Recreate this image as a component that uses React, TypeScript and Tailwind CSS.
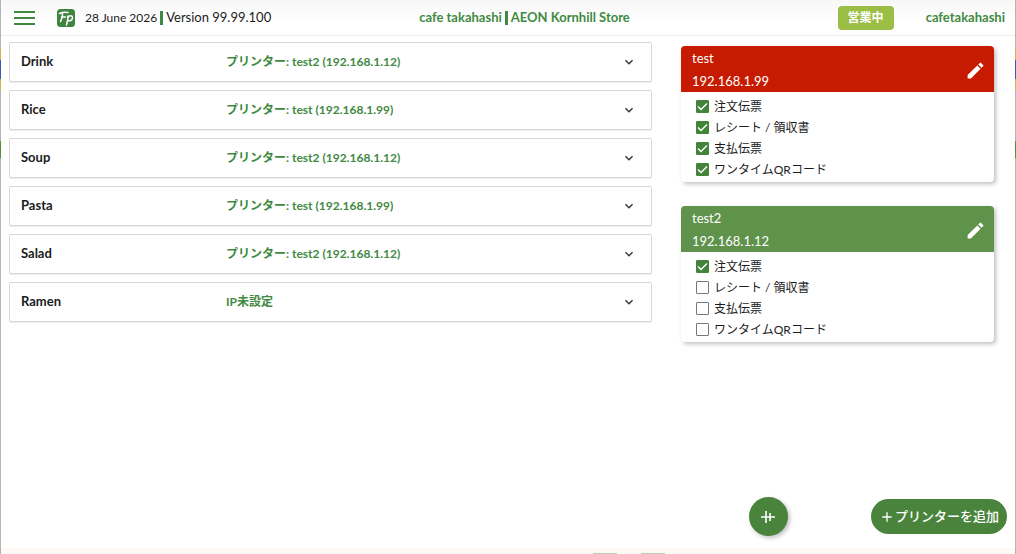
/**
 * Printer settings screen
 * Lists menu categories with their assigned printer and the registered printers
 */
import { useState } from "react";
import { MdAdd, MdEdit, MdExpandMore } from "react-icons/md";

interface Category {
  name: string;
  printer: string;
}

interface Printer {
  name: string;
  ip: string;
  online: boolean;
  jobs: string[];
}

const CATEGORIES: Category[] = [
  { name: "Drink", printer: "プリンター: test2 (192.168.1.12)" },
  { name: "Rice", printer: "プリンター: test (192.168.1.99)" },
  { name: "Soup", printer: "プリンター: test2 (192.168.1.12)" },
  { name: "Pasta", printer: "プリンター: test (192.168.1.99)" },
  { name: "Salad", printer: "プリンター: test2 (192.168.1.12)" },
  { name: "Ramen", printer: "IP未設定" },
];

const JOBS = ["注文伝票", "レシート / 領収書", "支払伝票", "ワンタイムQRコード"];

const PRINTERS: Printer[] = [
  { name: "test", ip: "192.168.1.99", online: false, jobs: JOBS },
  { name: "test2", ip: "192.168.1.12", online: true, jobs: ["注文伝票"] },
];

function Logo() {
  return (
    <svg className="size-[18px]" viewBox="0 0 36 36" fill="none">
      <rect width="36" height="36" rx="7" fill="#3f8540" />
      <g stroke="#fff" strokeWidth="3" strokeLinecap="round">
        <path d="M5 9C10 6 16 6 22 7M11 8C12 14 10 20 7 25M9 16h8" />
        <path d="M22 14c0 6-1 12-3 18M22 17c3-5 9-4 9 0 0 5-5 8-10 6" />
      </g>
    </svg>
  );
}

function Divider() {
  return <span className="h-[14px] w-[3px] bg-[#3f8a42]" />;
}

function Header() {
  return (
    <header className="flex h-9 items-center border-b border-[#ececec] bg-linear-to-b from-[#f7f7f7] to-white to-60% pr-[10px] pl-[13px] text-[13px]">
      <div className="flex w-[290px] shrink-0 items-center">
        <button aria-label="メニュー" className="flex w-[21px] flex-col gap-1">
          <span className="h-[2px] w-full bg-[#3f8a42]" />
          <span className="h-[2px] w-full bg-[#3f8a42]" />
          <span className="h-[2px] w-full bg-[#3f8a42]" />
        </button>
        <div className="ml-[22px]">
          <Logo />
        </div>
        <div className="ml-[10px] flex items-center gap-[3px]">
          <span className="text-[12px]">28 June 2026</span>
          <Divider />
          <span>Version 99.99.100</span>
        </div>
      </div>

      <div className="flex flex-1 items-center justify-center gap-[3px] font-bold text-[#3f8a42]">
        <span>cafe takahashi</span>
        <Divider />
        <span>AEON Kornhill Store</span>
      </div>

      <div className="flex w-[260px] shrink-0 items-center justify-end gap-8">
        <button className="h-6 w-14 rounded bg-[#9bbf45] text-[12px] font-bold text-white">
          営業中
        </button>
        <a href="#account" className="font-bold text-[#3f8a42]">
          cafetakahashi
        </a>
      </div>
    </header>
  );
}

function CategoryRow({ name, printer }: Category) {
  return (
    <button className="flex h-10 items-center rounded-xs border border-[#d8d8d8] pr-[14px] pl-[11px] text-left shadow-[0_1px_0_#ededed]">
      <span className="w-[205px] text-[13px] font-bold text-[#1c1c1c]">
        {name}
      </span>
      <span className="flex-1 text-[12px] font-bold text-[#3f8a42]">
        {printer}
      </span>
      <MdExpandMore className="size-4 text-[#333]" />
    </button>
  );
}

function PrinterCard({ name, ip, online, jobs }: Printer) {
  const [enabled, setEnabled] = useState(jobs);

  const toggle = (job: string) => {
    setEnabled(
      enabled.includes(job)
        ? enabled.filter((item) => item !== job)
        : [...enabled, job],
    );
  };

  return (
    <section className="overflow-hidden rounded bg-white shadow-[2px_2px_4px_rgba(0,0,0,0.25)]">
      <div
        className={`flex h-[46px] items-center justify-between pt-[2px] pr-2 pl-[11px] text-[13px] leading-[23px] text-white ${
          online ? "bg-[#5f924a]" : "bg-[#c61b00]"
        }`}
      >
        <div>
          <h2>{name}</h2>
          <p>{ip}</p>
        </div>
        <button aria-label="編集">
          <MdEdit className="size-[21px]" />
        </button>
      </div>

      <div className="flex flex-col px-[14px] pt-1 pb-[2px]">
        {JOBS.map((job) => (
          <label
            key={job}
            className="flex h-[21px] items-center gap-[5px] text-[12px]"
          >
            <span className="grid size-[14px] place-items-center">
              <input
                type="checkbox"
                checked={enabled.includes(job)}
                onChange={() => toggle(job)}
                className="peer col-start-1 row-start-1 size-[13px] appearance-none rounded-[1px] border border-[#777] checked:border-[#43833a] checked:bg-[#43833a]"
              />
              <svg
                className="pointer-events-none invisible col-start-1 row-start-1 size-[13px] text-white peer-checked:visible"
                viewBox="0 0 13 13"
                fill="none"
                stroke="currentColor"
                strokeWidth="1.4"
              >
                <path d="M2 6.5 5 9.5 11 3.5" />
              </svg>
            </span>
            {job}
          </label>
        ))}
      </div>
    </section>
  );
}

export default function App() {
  return (
    <div className="bg-[linear-gradient(#b5b5b5_49px,#c9b44c_49px_60px,#3c59b0_60px_79px,#c9b44c_79px_90px,#b5b5b5_90px_141px,#4f9432_141px_158px,#b5b5b5_158px)] px-px">
      <div
        lang="ja"
        className="flex min-h-screen flex-col bg-white font-['Lato','Noto_Sans_CJK_JP',sans-serif] text-[#1c1c1c]"
      >
        <Header />

        <main className="flex flex-1 items-start gap-[29px] pr-[21px] pl-2">
          <div className="flex flex-1 flex-col gap-2 pt-[6px]">
            {CATEGORIES.map((category) => (
              <CategoryRow key={category.name} {...category} />
            ))}
          </div>
          <div className="flex w-[313px] flex-col gap-6 pt-[10px]">
            {PRINTERS.map((printer) => (
              <PrinterCard key={printer.name} {...printer} />
            ))}
          </div>
        </main>

        <div className="flex items-center justify-end gap-[83px] pr-2 pb-3">
          <button
            aria-label="並べ替え"
            className="flex size-[39px] items-center justify-center rounded-full bg-[#4a843c] text-white shadow-[2px_2px_4px_rgba(0,0,0,0.25)]"
          >
            <svg
              className="size-4"
              viewBox="0 0 16 16"
              fill="none"
              stroke="currentColor"
              strokeWidth="1.6"
            >
              <path d="M1 8h14M6 2v12M10 4v8" />
            </svg>
          </button>
          <button className="flex h-[35px] items-center rounded-full bg-[#4a843c] px-2 text-[13px] font-medium text-white">
            <MdAdd className="size-4" />
            プリンターを追加
          </button>
        </div>

        <footer className="flex h-[6px] items-end justify-center gap-6 bg-[#fdf7f5] pl-[242px]">
          <span className="h-px w-6 bg-[#b9cdb5]" />
          <span className="h-px w-6 bg-[#b9cdb5]" />
        </footer>
      </div>
    </div>
  );
}
